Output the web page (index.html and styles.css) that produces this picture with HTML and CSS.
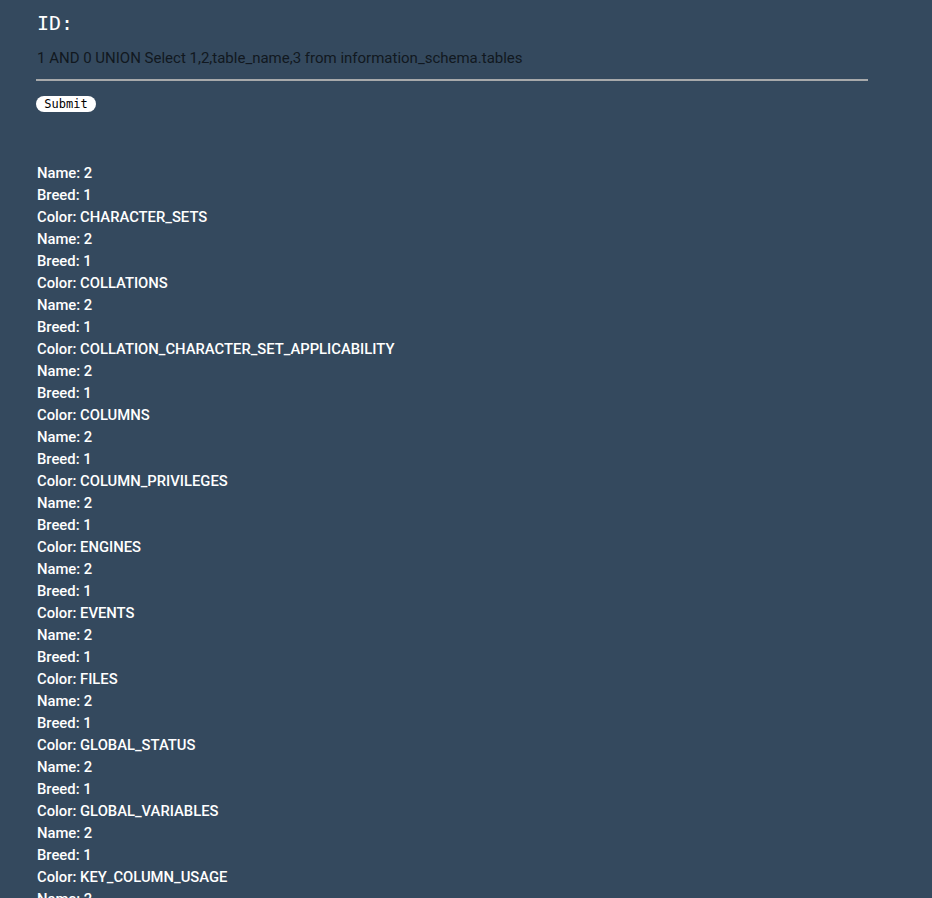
FILE: index.html
```html
<!DOCTYPE html>
<html>
<head>
<meta charset="utf-8">
<link rel="stylesheet" href="styles.css">
</head>
<body>
<form class="form">
  <label class="label" for="id">ID:</label>
  <input class="field" id="id" type="text" value="1 AND 0 UNION Select 1,2,table_name,3 from information_schema.tables">
  <button class="submit" type="button">Submit</button>
</form>
<div class="results">
  <div>Name: 2</div><div>Breed: 1</div><div>Color: CHARACTER_SETS</div>
  <div>Name: 2</div><div>Breed: 1</div><div>Color: COLLATIONS</div>
  <div>Name: 2</div><div>Breed: 1</div><div>Color: COLLATION_CHARACTER_SET_APPLICABILITY</div>
  <div>Name: 2</div><div>Breed: 1</div><div>Color: COLUMNS</div>
  <div>Name: 2</div><div>Breed: 1</div><div>Color: COLUMN_PRIVILEGES</div>
  <div>Name: 2</div><div>Breed: 1</div><div>Color: ENGINES</div>
  <div>Name: 2</div><div>Breed: 1</div><div>Color: EVENTS</div>
  <div>Name: 2</div><div>Breed: 1</div><div>Color: FILES</div>
  <div>Name: 2</div><div>Breed: 1</div><div>Color: GLOBAL_STATUS</div>
  <div>Name: 2</div><div>Breed: 1</div><div>Color: GLOBAL_VARIABLES</div>
  <div>Name: 2</div><div>Breed: 1</div><div>Color: KEY_COLUMN_USAGE</div>
  <div>Name: 2</div><div>Breed: 1</div><div>Color: PARAMETERS</div>
</div>
</body>
</html>
```
FILE: styles.css
```css
html, body {
  margin: 0;
  padding: 0;
  background: #34495e;
}
body {
  padding: 10px 36px 0 36px;
  font-family: Roboto, "Liberation Sans", sans-serif;
  overflow: hidden;
  height: 888px;
}
.form {
  display: flex;
  flex-direction: column;
  align-items: flex-start;
  width: 832px;
}
.label {
  font-family: "DejaVu Sans Mono", monospace;
  font-size: 20px;
  line-height: 26px;
  color: #ffffff;
  margin-left: 1px;
}
.field {
  box-sizing: border-box;
  width: 832px;
  margin-top: 10px;
  padding: 0 0 9px 1px;
  height: 35px;
  background: transparent;
  border: none;
  border-bottom: 2px solid #a7a9ab;
  color: #111820;
  font-family: Roboto, "Liberation Sans", sans-serif;
  font-size: 15px;
  outline: none;
}
.submit {
  margin-top: 15px;
  height: 16px;
  width: 60px;
  padding: 0;
  border: none;
  border-radius: 8px;
  background: #ffffff;
  color: #000;
  font-family: "DejaVu Sans Mono", monospace;
  font-size: 12px;
  line-height: 16px;
}
.results {
  margin-top: 50px;
  color: #ffffff;
  font-size: 14.8px;
  font-weight: 500;
  line-height: 22px;
  padding-left: 1px;
}
```
